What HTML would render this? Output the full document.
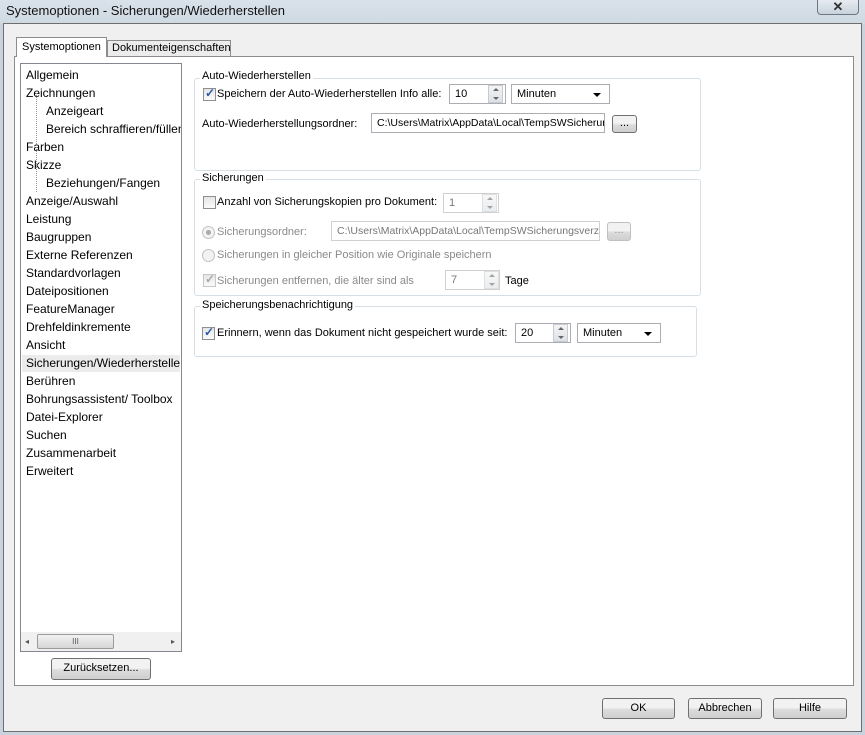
<!DOCTYPE html>
<html><head><meta charset="utf-8"><style>
*{box-sizing:border-box}
body{margin:0;width:865px;height:735px;overflow:hidden;font-family:"Liberation Sans",sans-serif;font-size:12px;color:#000;background:#c9d3dd;position:relative}
.a{position:absolute}
.title{left:0;top:0;width:865px;height:24px;background:linear-gradient(#d9e2ea,#cfd9e2);}
.title span{position:absolute;left:6px;top:3px;font-size:13px;color:#111}
.close{left:817px;top:-2px;width:42px;height:17px;border:1px solid #6d7784;border-radius:0 0 4px 4px;background:linear-gradient(#e8edf2,#c9d2dc);text-align:center;font-size:13px;line-height:15px;color:#333;font-weight:bold}
.dlg{left:3px;top:23px;width:859px;height:709px;background:#f0f0f0;border:1px solid #6e6e6e}
.panel{left:14px;top:56px;width:840px;height:630px;background:#fff;border:1px solid #8c8c8c}
.tab{top:37px;height:20px;border:1px solid #8c8c8c;border-bottom:none;background:#fff;padding:3px 5px 0;font-size:11px;white-space:nowrap;overflow:hidden}
.tab2{top:40px;height:16px;background:#ececec;padding:1px 4px 0}
.list{left:20px;top:63px;width:162px;height:589px;border:1px solid #828790;background:#fff;overflow:hidden}
.it{position:absolute;left:5px;white-space:nowrap;font-size:12px}
.sub{left:25px}
.sel{left:1px;padding-left:4px;width:158px;background:#ececec;overflow:hidden}
.grp{border:1px solid #d5dfe5;border-radius:3px}
.gl{position:absolute;background:#fff;padding:0 2px;font-size:11px}
.cb{position:absolute;width:13px;height:13px;border:1px solid #8f8f8f;background:linear-gradient(#e6e6e6,#fafafa)}
.cb.ck::after{content:"✓";position:absolute;left:1px;top:-3px;font-size:12px;color:#2a5aa8;font-weight:bold}
.cb.dis{border-color:#c6c6c6}
.cb.dis.ck::after{color:#aaa}
.t{position:absolute;font-size:11px;white-space:nowrap}
.g{color:#8a8a8a}
.inp{position:absolute;border:1px solid #abadb3;background:#fff;height:20px;font-size:11px;padding:3px 5px;white-space:nowrap;overflow:hidden}
.inp.dis{border-color:#d0d0d0;color:#777}
.spin{position:absolute;width:15px;height:18px;border:1px solid #c7cbd1;background:linear-gradient(#f4f4f4,#dde1e6)}
.spin::before{content:"";position:absolute;left:4px;top:2px;border:3px solid transparent;border-bottom:3px solid #666;border-top:0}
.spin::after{content:"";position:absolute;left:4px;bottom:2px;border:3px solid transparent;border-top:3px solid #666;border-bottom:0}
.dd::after{content:"";position:absolute;right:8px;top:8px;border:4px solid transparent;border-top:4px solid #000;border-bottom:0}
.btn{position:absolute;border:1px solid #707070;border-radius:3px;background:linear-gradient(#f2f2f2 45%,#dcdcdc 55%,#cfcfcf);text-align:center;font-size:11px;line-height:19px}
.btn.dis{border-color:#c0c0c0;color:#999}
.rad{position:absolute;width:13px;height:13px;border-radius:50%;border:1px solid #c2c2c2;background:#f2f2f2}
.rad.on::after{content:"";position:absolute;left:3px;top:3px;width:5px;height:5px;border-radius:50%;background:#aaa}
</style></head><body>
<div class="a title"><span>Systemoptionen - Sicherungen/Wiederherstellen</span></div>
<div class="a close">✕</div>
<div class="a dlg"></div>
<div class="a panel"></div>
<div class="a tab" style="left:16px;width:91px;z-index:2">Systemoptionen</div>
<div class="a tab tab2" style="left:107px;width:124px">Dokumenteigenschaften</div>
<div class="a list">
<div class="it" style="top:4px">Allgemein</div>
<div class="it" style="top:22px">Zeichnungen</div>
<div class="it sub" style="top:40px">Anzeigeart</div>
<div class="it sub" style="top:58px">Bereich schraffieren/füllen</div>
<div class="it" style="top:76px">Farben</div>
<div class="it" style="top:94px">Skizze</div>
<div class="it sub" style="top:112px">Beziehungen/Fangen</div>
<div class="it" style="top:130px">Anzeige/Auswahl</div>
<div class="it" style="top:148px">Leistung</div>
<div class="it" style="top:166px">Baugruppen</div>
<div class="it" style="top:184px">Externe Referenzen</div>
<div class="it" style="top:202px">Standardvorlagen</div>
<div class="it" style="top:220px">Dateipositionen</div>
<div class="it" style="top:238px">FeatureManager</div>
<div class="it" style="top:256px">Drehfeldinkremente</div>
<div class="it" style="top:274px">Ansicht</div>
<div class="it sel" style="top:291px;height:17px;padding-top:1px">Sicherungen/Wiederherstellen</div>
<div class="it" style="top:310px">Berühren</div>
<div class="it" style="top:328px">Bohrungsassistent/ Toolbox</div>
<div class="it" style="top:346px">Datei-Explorer</div>
<div class="it" style="top:364px">Suchen</div>
<div class="it" style="top:382px">Zusammenarbeit</div>
<div class="it" style="top:400px">Erweitert</div>
<div style="position:absolute;left:15px;top:26px;width:1px;height:102px;border-left:1px dotted #999"></div>
<div style="position:absolute;left:0;top:568px;width:160px;height:19px;background:#f0f0f0"></div>
<div style="position:absolute;left:4px;top:573px;font-size:8px;color:#555">◂</div>
<div style="position:absolute;left:150px;top:573px;font-size:8px;color:#555">▸</div>
<div style="position:absolute;left:16px;top:570px;width:77px;height:15px;border:1px solid #9b9b9b;border-radius:2px;background:linear-gradient(#f2f2f2,#d6d6d6);text-align:center;font-size:8px;line-height:13px;color:#555">III</div>
</div>
<div class="btn" style="left:51px;top:658px;width:100px;height:22px">Zurücksetzen...</div>

<div class="a grp" style="left:194px;top:78px;width:507px;height:93px"></div>
<div class="gl" style="left:200px;top:70px">Auto-Wiederherstellen</div>
<div class="cb ck" style="left:203px;top:88px"></div>
<div class="t" style="left:217px;top:88px">Speichern der Auto-Wiederherstellen Info alle:</div>
<div class="inp" style="left:449px;top:84px;width:57px">10</div>
<div class="spin" style="left:488px;top:85px"></div>
<div class="inp dd" style="left:511px;top:84px;width:99px">Minuten</div>
<div class="t" style="left:202px;top:118px">Auto-Wiederherstellungsordner:</div>
<div class="inp" style="left:371px;top:113px;width:234px;font-size:10.5px">C:\Users\Matrix\AppData\Local\TempSWSicherungs</div>
<div class="btn" style="left:612px;top:115px;width:25px;height:18px;line-height:15px">...</div>

<div class="a grp" style="left:194px;top:179px;width:507px;height:117px"></div>
<div class="gl" style="left:200px;top:172px">Sicherungen</div>
<div class="cb" style="left:203px;top:196px"></div>
<div class="t" style="left:217px;top:196px">Anzahl von Sicherungskopien pro Dokument:</div>
<div class="inp dis" style="left:443px;top:193px;width:56px">1</div>
<div class="spin" style="left:482px;top:194px;opacity:.6"></div>
<div class="rad on" style="left:202px;top:226px"></div>
<div class="t g" style="left:217px;top:226px">Sicherungsordner:</div>
<div class="inp dis" style="left:331px;top:221px;width:269px;font-size:10.5px">C:\Users\Matrix\AppData\Local\TempSWSicherungsverz</div>
<div class="btn dis" style="left:607px;top:222px;width:24px;height:19px;line-height:15px">...</div>
<div class="rad" style="left:202px;top:249px"></div>
<div class="t g" style="left:217px;top:249px">Sicherungen in gleicher Position wie Originale speichern</div>
<div class="cb dis ck" style="left:203px;top:274px"></div>
<div class="t g" style="left:217px;top:275px">Sicherungen entfernen, die älter sind als</div>
<div class="inp dis" style="left:445px;top:270px;width:55px">7</div>
<div class="spin" style="left:484px;top:271px;opacity:.6"></div>
<div class="t" style="left:505px;top:275px">Tage</div>

<div class="a grp" style="left:194px;top:306px;width:503px;height:51px"></div>
<div class="gl" style="left:200px;top:299px">Speicherungsbenachrichtigung</div>
<div class="cb ck" style="left:202px;top:327px"></div>
<div class="t" style="left:217px;top:327px">Erinnern, wenn das Dokument nicht gespeichert wurde seit:</div>
<div class="inp" style="left:515px;top:323px;width:56px">20</div>
<div class="spin" style="left:553px;top:324px"></div>
<div class="inp dd" style="left:577px;top:323px;width:84px">Minuten</div>

<div class="btn" style="left:602px;top:698px;width:73px;height:21px">OK</div>
<div class="btn" style="left:688px;top:698px;width:74px;height:21px">Abbrechen</div>
<div class="btn" style="left:773px;top:698px;width:74px;height:21px">Hilfe</div>
</body></html>
